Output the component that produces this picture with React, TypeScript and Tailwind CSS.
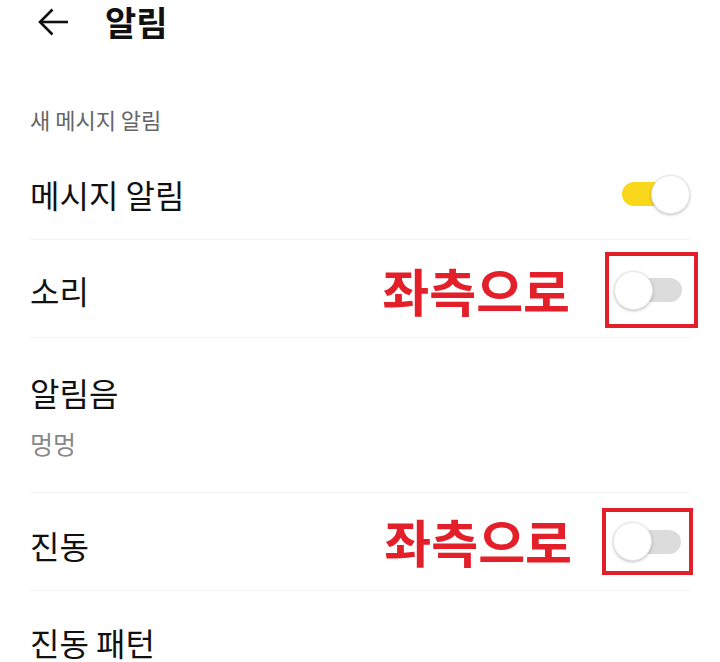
import React from "react";

const FONT = { fontFamily: '"Noto Sans CJK KR", "Noto Sans", sans-serif' };

function Toggle({ on }: { on: boolean }) {
  return (
    <div className="relative w-[76px] h-[39px] shrink-0">
      <div
        className={
          "absolute left-[8px] top-[7.5px] w-[60px] h-[24px] rounded-full " +
          (on ? "bg-[#f9d81b]" : "bg-[#dcdcdc]")
        }
      />
      <div
        className={
          "absolute top-0 w-[39px] h-[39px] rounded-full bg-white border border-[#e6e6e6] shadow-[0_1px_3px_rgba(0,0,0,0.25)] " +
          (on ? "right-0" : "left-0")
        }
      />
    </div>
  );
}

function Divider() {
  return <div className="mx-[30px] h-px bg-[#f2f2f2]" />;
}

export default function App() {
  return (
    <div className="w-[720px] h-[662px] bg-white overflow-hidden text-[#111]" style={FONT}>
      {/* Header */}
      <div className="h-[44px] flex items-center">
        <svg
          className="ml-[38px]"
          width="30"
          height="30"
          viewBox="0 0 30 30"
          fill="none"
          stroke="#111"
          strokeWidth="2.6"
          strokeLinecap="butt"
          strokeLinejoin="miter"
        >
          <path d="M2 15 H30" />
          <path d="M14.5 2.5 L2 15 L14.5 27.5" />
        </svg>
        <span className="ml-[37px] text-[34px] font-bold leading-none">알림</span>
      </div>

      {/* Section title */}
      <div className="h-[105px] pt-[64px] px-[30px]">
        <div className="text-[22px] leading-[22px] text-[#666]">새 메시지 알림</div>
      </div>

      {/* Row 1 */}
      <div className="h-[90px] flex items-center pl-[30px] pr-[30px]">
        <span className="text-[32px] leading-[32px]">메시지 알림</span>
        <div className="flex-1" />
        <Toggle on={true} />
      </div>
      <Divider />

      {/* Row 2 */}
      <div className="h-[97px] flex items-center pt-[3px] pl-[30px] pr-[22px]">
        <span className="text-[32px] leading-[32px]">소리</span>
        <div className="flex-1" />
        <span className="text-[51px] font-bold leading-none text-[#e3202a] mr-[35px]">좌측으로</span>
        <div className="w-[93px] h-[76px] border-4 border-[#e3202a] flex items-center pl-[5px]">
          <Toggle on={false} />
        </div>
      </div>
      <Divider />

      {/* Row 3 */}
      <div className="h-[154px] pt-[38px] px-[30px] flex flex-col">
        <span className="text-[32px] leading-[32px]">알림음</span>
        <span className="mt-[22px] text-[25px] leading-[26px] text-[#888]">멍멍</span>
      </div>
      <Divider />

      {/* Row 4 */}
      <div className="h-[97px] flex items-center pl-[30px] pr-[27px]">
        <span className="text-[32px] leading-[32px] mt-[6px]">진동</span>
        <div className="flex-1" />
        <span className="text-[51px] font-bold leading-none text-[#e3202a] mr-[30px]">좌측으로</span>
        <div className="w-[91px] h-[67px] border-4 border-[#e3202a] flex items-center pl-[7px]">
          <Toggle on={false} />
        </div>
      </div>
      <Divider />

      {/* Row 5 */}
      <div className="h-[71px] flex items-start pt-[35px] px-[30px]">
        <span className="text-[32px] leading-[32px]">진동 패턴</span>
      </div>
    </div>
  );
}
